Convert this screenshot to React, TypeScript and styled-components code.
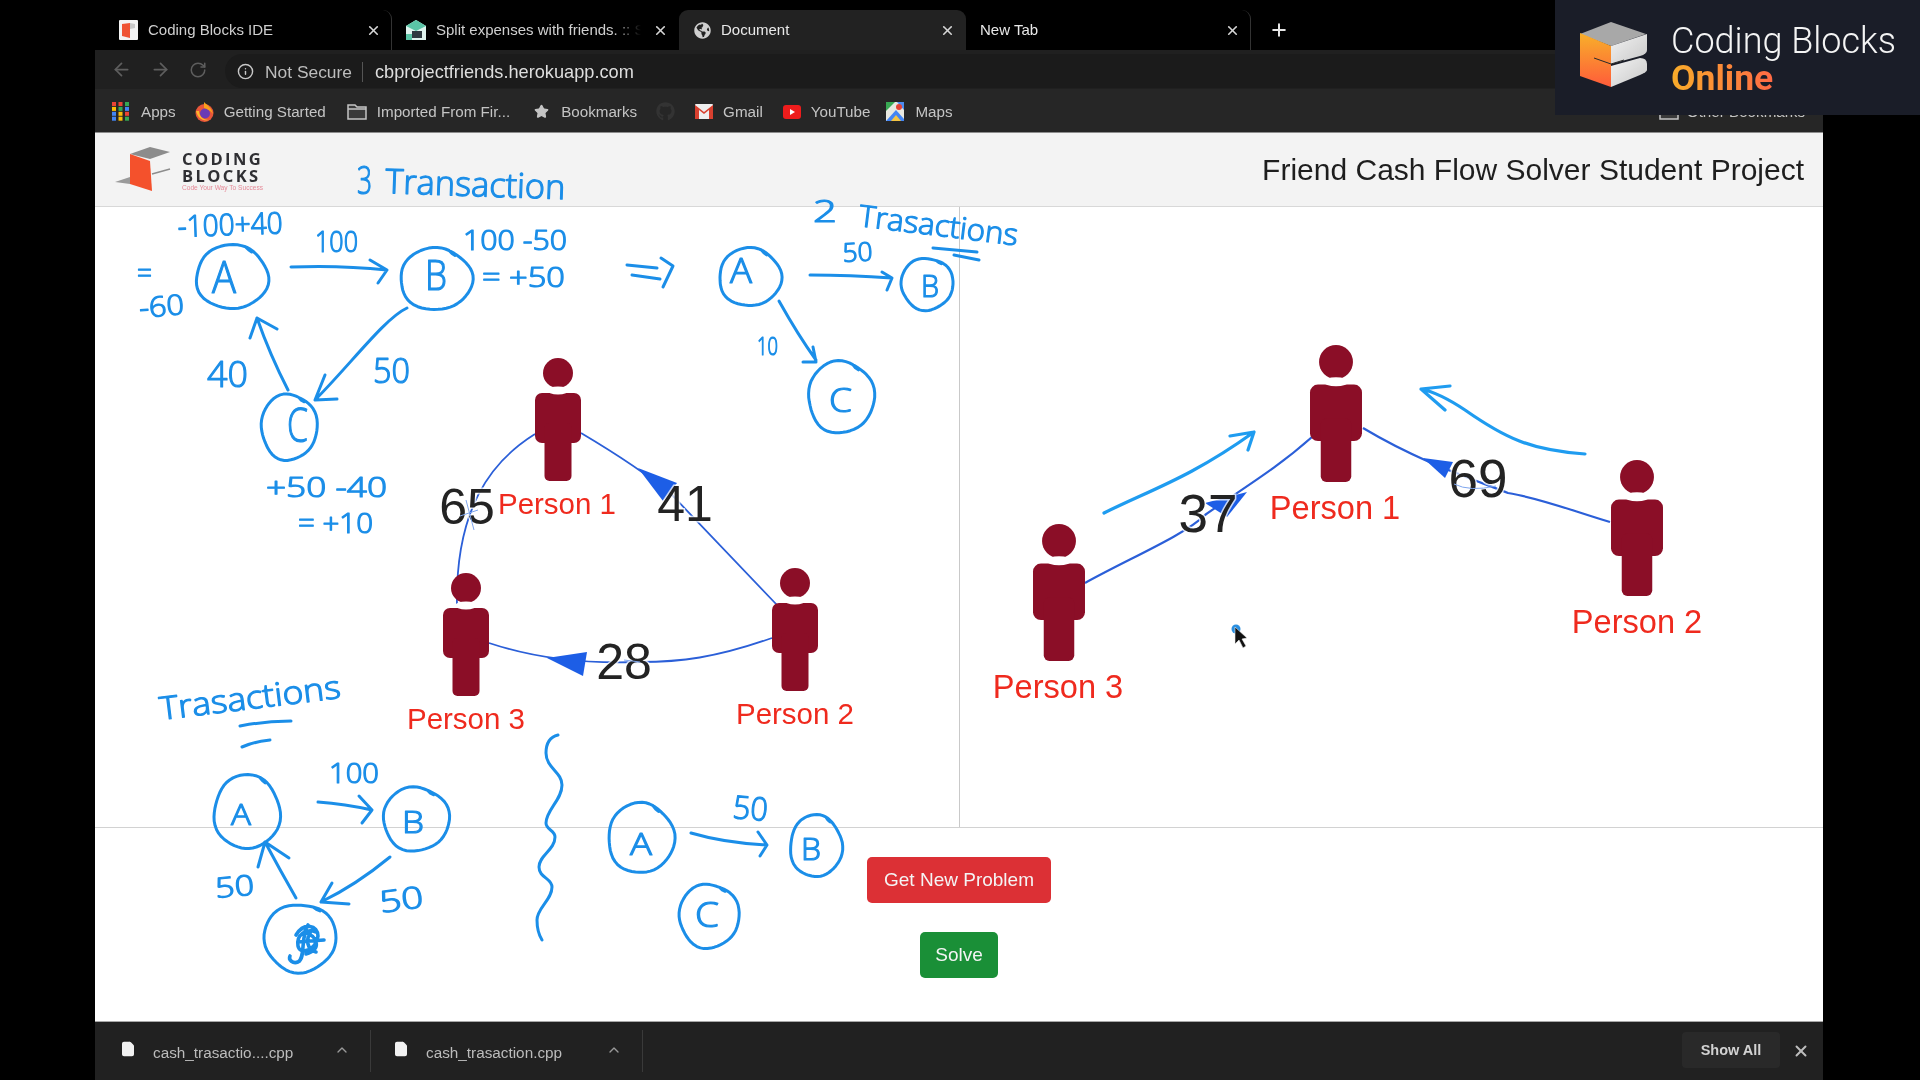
import React from 'react';
import styled, { createGlobalStyle } from 'styled-components';
import { ArrowLeft, ArrowRight, RotateCw, Info, X, Plus, ChevronUp, Star, File } from 'lucide-react';
import { FaGlobeAmericas, FaGithub } from 'react-icons/fa';

const Global = createGlobalStyle`
  html, body { margin: 0; padding: 0; background: #000; }
  body { font-family: "Liberation Sans", Arial, sans-serif; }
`;

const Page = styled.div`
  position: relative;
  width: 1920px;
  height: 1080px;
  overflow: hidden;
  background: #000;
  filter: blur(0.45px);
`;

const Window = styled.div`
  margin-left: 95px;
  width: 1728px;
  height: 1080px;
  display: flex;
  flex-direction: column;
`;

const TabStrip = styled.div`
  height: 40px;
  padding: 10px 0 0 11px;
  display: flex;
  align-items: stretch;
  background: #000;
  flex: none;
`;

const Tab = styled.div<{ $w: number; $active?: boolean; $sep?: boolean; $pad: number }>`
  width: ${p => p.$w}px;
  box-sizing: border-box;
  padding: 0 10px 0 ${p => p.$pad}px;
  display: flex;
  align-items: center;
  gap: 10px;
  background: ${p => (p.$active ? '#222' : 'transparent')};
  border-radius: 9px 9px 0 0;
  border-right: ${p => (p.$sep ? '1px solid #333' : '1px solid transparent')};
`;

const TabTitle = styled.span<{ $fade?: boolean; $active?: boolean }>`
  flex: 1;
  min-width: 0;
  margin-top: -2px;
  white-space: nowrap;
  font-size: 15px;
  color: ${p => (p.$active ? '#e8e8e8' : '#cfcfcf')};
  ${p => (p.$fade ? 'mask-image: linear-gradient(90deg, #000 86%, transparent 99%);' : '')}
`;

const TabClose = styled(X)`
  flex: none;
  width: 15px;
  height: 15px;
  color: #d6d6d6;
  stroke-width: 2.6;
`;

const NewTab = styled(Plus)`
  align-self: center;
  margin-left: 18px;
  width: 20px;
  height: 20px;
  color: #e6e6e6;
  stroke-width: 2.4;
`;

const Toolbar = styled.div`
  height: 39px;
  flex: none;
  box-sizing: border-box;
  padding-left: 16px;
  display: flex;
  align-items: center;
  gap: 18px;
  background: #202020;
  color: #5e5e5e;
`;

const Omnibox = styled.div`
  flex: 1;
  height: 34px;
  margin-top: 2px;
  display: flex;
  align-items: center;
  padding: 2px 0 0 12px;
  box-sizing: border-box;
  border-radius: 17px 0 0 17px;
  background: #1b1b1b;
`;

const InfoIcon = styled(Info)`
  width: 17px;
  height: 17px;
  color: #c8c8c8;
  margin-right: 11px;
`;

const Secure = styled.span`
  font-size: 17.4px;
  color: #bdbdbd;
  padding-right: 10px;
  border-right: 1px solid #555;
  line-height: 20px;
`;

const Url = styled.span`
  font-size: 18.2px;
  padding-top: 1px;
  color: #dedede;
  margin-left: 12px;
`;

const Bookmarks = styled.div`
  height: 44px;
  flex: none;
  box-sizing: border-box;
  padding: 2px 0 0 17px;
  display: flex;
  align-items: center;
  background: #262626;
  border-bottom: 1px solid #8d8d8d;
`;

const Mark = styled.span<{ $gap: number; $left: number }>`
  display: inline-flex;
  align-items: center;
  gap: ${p => p.$gap}px;
  margin-left: ${p => p.$left}px;
  font-size: 15.2px;
  color: #c4c4c4;
  white-space: nowrap;
`;

const OtherMarks = styled(Mark)`
  margin-left: auto;
  margin-right: 18px;
`;

const SiteHeader = styled.header`
  height: 74px;
  flex: none;
  box-sizing: border-box;
  padding: 0 19px 0 20px;
  display: flex;
  align-items: center;
  justify-content: space-between;
  background: #f3f3f3;
  border-bottom: 1px solid #d8d8d8;
`;

const Brand = styled.div`
  display: flex;
  align-items: center;
  gap: 11px;
`;

const BrandText = styled.div`
  display: flex;
  flex-direction: column;
  align-items: flex-start;
  margin-top: 2px;
`;

const BrandWord = styled.span`
  color: #2f2f33;
  font-family: "Open Sans", sans-serif;
  font-weight: 700;
  font-size: 16.5px;
  line-height: 17px;
  letter-spacing: 2.4px;
`;

const BrandTag = styled.span`
  font-size: 6.6px;
  line-height: 8px;
  color: #e58a98;
`;

const SiteTitle = styled.h1`
  margin: 0;
  font-size: 30px;
  font-weight: 400;
  color: #1e1e1e;
`;

const Panels = styled.div`
  height: 621px;
  flex: none;
  display: grid;
  grid-template-columns: 865px 863px;
  background: #fff;
  border-bottom: 1px solid #d2d2d2;
  box-sizing: border-box;
`;

const Panel = styled.div<{ $split?: boolean }>`
  border-right: ${p => (p.$split ? '1px solid #c9c9c9' : 'none')};
`;

const GraphSvg = styled.svg`
  display: block;
  width: 100%;
  height: 100%;
`;

const PersonName = styled.text<{ $size: number }>`
  font-size: ${p => p.$size}px;
  fill: #ef2a1e;
  text-anchor: middle;
`;

const EdgeWeight = styled.text<{ $size: number }>`
  font-size: ${p => p.$size}px;
  fill: #232323;
  text-anchor: middle;
  stroke: rgba(255, 255, 255, 0.75);
  stroke-width: 3px;
  paint-order: stroke;
`;

const Actions = styled.div`
  flex: 1;
  display: flex;
  flex-direction: column;
  align-items: center;
  gap: 29px;
  padding-top: 29px;
  background: #fff;
`;

const Btn = styled.button<{ $bg: string; $w: number }>`
  width: ${p => p.$w}px;
  height: 46px;
  border: none;
  border-radius: 5px;
  background: ${p => p.$bg};
  color: #f4f4f4;
  font-family: "Liberation Sans", sans-serif;
  font-size: 19px;
  padding: 0;
`;

const Downloads = styled.footer`
  height: 59px;
  flex: none;
  box-sizing: border-box;
  padding-left: 3px;
  display: flex;
  align-items: center;
  background: #212121;
  border-top: 1px solid #a8a8a8;
`;

const DownloadItem = styled.div<{ $w: number }>`
  width: ${p => p.$w}px;
  height: 42px;
  box-sizing: border-box;
  padding: 0 20px 0 23px;
  display: flex;
  align-items: center;
  gap: 18px;
  border-right: 1px solid #3a3a3a;
`;

const FileIcon = styled(File)`
  flex: none;
  width: 16px;
  height: 20px;
  margin: -4px -1px 0 -1px;
  color: #f2f2f2;
  fill: #f2f2f2;
`;

const FileName = styled.span`
  flex: 1;
  padding-top: 4px;
  font-size: 15.3px;
  color: #bcbcbc;
  white-space: nowrap;
`;

const Chevron = styled(ChevronUp)`
  flex: none;
  width: 16px;
  height: 16px;
  color: #9a9a9a;
  margin-top: -2px;
`;

const ShowAll = styled.div`
  margin-left: auto;
  margin-top: -2px;
  width: 98px;
  height: 36px;
  display: flex;
  align-items: center;
  justify-content: center;
  border-radius: 4px;
  background: #292929;
  color: #d2d2d2;
  font-size: 14.5px;
  font-weight: 700;
`;

const BarClose = styled(X)`
  width: 18px;
  height: 18px;
  margin: -1px 13px 0 12px;
  color: #bdbdbd;
  stroke-width: 2.6;
`;

const InkLayer = styled.svg`
  position: absolute;
  left: 0;
  top: 0;
  width: 1920px;
  height: 1080px;
  pointer-events: none;
`;

const Ink = styled.path<{ $w?: number; $c?: string }>`
  fill: none;
  stroke: ${p => p.$c || '#1b8ee8'};
  stroke-width: ${p => p.$w || 3}px;
  stroke-linecap: round;
  stroke-linejoin: round;
`;

const InkWord = styled.text`
  font-family: "Open Sans", sans-serif;
  font-weight: 300;
  fill: #1b8ee8;
  stroke: #1b8ee8;
  stroke-width: 1.2px;
  stroke-linejoin: round;
`;

const LogoCard = styled.div`
  position: absolute;
  right: 0;
  top: 0;
  width: 365px;
  height: 115px;
  box-sizing: border-box;
  padding: 22px 0 0 25px;
  display: flex;
  align-items: flex-start;
  gap: 23px;
  background: #1a1d28;
`;

const LogoText = styled.div`
  display: flex;
  flex-direction: column;
  font-family: Roboto, sans-serif;
`;

const LogoName = styled.span`
  font-size: 36px;
  line-height: 38px;
  font-weight: 300;
  color: #f4f4f4;
  white-space: nowrap;
`;

const LogoSub = styled.span`
  font-size: 35.5px;
  line-height: 36px;
  font-weight: 700;
  background: linear-gradient(90deg, #f8ac2a, #ff6a45);
  -webkit-background-clip: text;
  background-clip: text;
  color: transparent;
  width: max-content;
`;

function blob(cx: number, cy: number, rx: number, ry: number, ph = 0): string {
  const pts: string[] = [];
  const n = 56;
  for (let i = 0; i <= n; i++) {
    const t = i / n;
    const a = -1.15 + t * Math.PI * 2 * 1.03;
    const k = 1 + 0.025 * Math.sin(3 * a + ph) + 0.015 * Math.sin(5 * a + ph * 2) + (t > 0.97 ? -0.04 : 0);
    pts.push(`${(cx + rx * k * Math.cos(a)).toFixed(1)} ${(cy + ry * k * Math.sin(a)).toFixed(1)}`);
  }
  return 'M' + pts.join(' L');
}

const circles: [number, number, number, number, number][] = [
  [232, 277, 36, 32, 0.4], [436, 279, 36, 31, 1.2], [289, 427, 28, 33, 2.1],
  [750, 277, 31, 29, 0.9], [927, 284, 26, 26, 2.6], [841, 397, 33, 36, 1.7],
  [247, 812, 33, 37, 0.2], [416, 819, 33, 32, 1.9], [300, 938, 36, 34, 2.9],
  [641, 838, 33, 35, 1.1], [816, 846, 26, 31, 0.6], [709, 916, 30, 32, 2.3],
];

const strokes: string[] = [
  'M291 267 Q340 265 387 270 M370 260 L387 270 L378 283',
  'M407 308 C385 318 350 365 315 400 M325 375 L315 400 L337 399',
  'M288 390 Q270 355 257 318 M250 338 L257 318 L277 329',
  'M627 265 L657 268 M632 275 L660 279 M661 258 L673 266 L663 287',
  'M810 275 Q850 275 892 278 M882 272 L892 278 L887 290',
  'M779 301 Q798 335 816 360 M803 362 L816 362 L813 347',
  'M933 248 L977 252 M954 255 L979 260',
  'M240 726 Q265 721 291 721 M242 747 Q256 741 270 740',
  'M318 802 Q345 804 372 810 M359 796 L372 810 L362 823',
  'M390 857 Q356 885 321 902 M332 883 L321 902 L349 904',
  'M296 898 Q280 870 265 842 M258 867 L265 842 L289 858',
  'M558 735 Q546 738 546 753 C546 768 562 772 562 785 C562 800 546 810 546 823 C546 830 555 830 555 837 C555 850 539 855 539 867 C539 878 552 878 552 887 C552 900 537 908 537 920 Q537 932 542 940',
  'M691 833 Q725 843 767 845 M758 832 L767 845 L760 856',
];

const scribble =
  'M296 935 C304 922 318 925 318 936 C316 950 300 956 298 946 C296 935 306 928 316 932 M308 925 C300 938 306 958 298 962 C293 964 288 960 290 956 M298 942 L324 940 M304 932 C318 936 322 950 306 954 M312 930 C304 940 308 950 316 952';

const lightStrokes: string[] = [
  'M1104 513 C1150 490 1190 478 1254 432 M1230 436 L1254 432 L1248 450',
  'M1585 454 C1530 450 1505 438 1465 410 C1450 400 1435 392 1421 389 M1450 386 L1421 389 L1445 410',
];

const words: [string, number, number, number, number, number][] = [
  ['3', 357, 194, 15, 38, 0],
  ['Transaction', 385, 193, 180, 34, 2],
  ['-100+40', 178, 237, 105, 30, -2],
  ['100', 315, 252, 43, 30, 0],
  ['100 -50', 463, 250, 104, 28, 0],
  ['= +50', 482, 287, 83, 28, 0],
  ['=', 137, 283, 15, 28, 0],
  ['-60', 140, 318, 45, 28, -5],
  ['A', 212, 293, 24, 44, 0],
  ['B', 425, 290, 22, 42, 0],
  ['40', 207, 387, 41, 36, 0],
  ['50', 373, 383, 37, 34, 0],
  ['C', 287, 442, 21, 48, 0],
  ['+50 -40', 266, 497, 121, 28, 0],
  ['= +10', 298, 533, 75, 28, 0],
  ['2', 813, 222, 24, 32, 0],
  ['Trasactions', 858, 226, 160, 30, 7],
  ['50', 843, 262, 30, 26, -3],
  ['A', 730, 283, 22, 34, 0],
  ['B', 921, 297, 18, 32, 0],
  ['10', 757, 355, 21, 26, 0],
  ['C', 829, 412, 23, 33, 0],
  ['Trasactions', 161, 720, 182, 32, -7],
  ['100', 329, 783, 50, 28, 0],
  ['A', 231, 825, 20, 30, 0],
  ['B', 402, 833, 22, 32, 0],
  ['50', 216, 898, 39, 28, -5],
  ['50', 381, 913, 44, 30, -8],
  ['A', 630, 855, 22, 32, 0],
  ['50', 732, 818, 35, 32, 5],
  ['B', 801, 860, 20, 32, 0],
  ['C', 695, 927, 24, 34, 0],
];

const Person: React.FC<{ cx: number; cy: number; s: number; h: number }> = ({ cx, cy, s, h }) => (
  <g fill="#8b0e27">
    <circle cx={cx} cy={cy} r={15 * s} />
    <rect x={cx - 23 * s} y={cy + 20 * s} width={46 * s} height={50 * s} rx={7 * s} />
    <rect x={cx - 13.5 * s} y={cy + 50 * s} width={27 * s} height={h - 50 * s} rx={5 * s} />
    <ellipse cx={cx} cy={cy + 17.5 * s} rx={11 * s} ry={4 * s} fill="#fff" />
  </g>
);

const edge = '#2b5fd8';
const head = '#1d5ee6';

const LeftGraph = () => (
  <GraphSvg viewBox="95 207 864 620">
    <g fill="none" stroke={edge} strokeWidth="1.8">
      <path d="M581 433 Q640 468 672 495 Q720 545 777 605" />
      <path d="M535 434 C490 462 455 510 457 607" />
      <path d="M772 638 C715 658 680 662 640 662 C590 664 540 660 489 643" />
    </g>
    <polygon points="638,468 677,483 663,501" fill={head} />
    <polygon points="547,658 587,652 583,676" fill={head} />
    <Person cx={558} cy={373} s={1} h={108} />
    <Person cx={795} cy={583} s={1} h={108} />
    <Person cx={466} cy={588} s={1} h={108} />
    <PersonName $size={29.5} x={557} y={514}>Person 1</PersonName>
    <PersonName $size={29.5} x={795} y={724}>Person 2</PersonName>
    <PersonName $size={29.5} x={466} y={729}>Person 3</PersonName>
    <EdgeWeight $size={50} x={467} y={524}>65</EdgeWeight>
    <EdgeWeight $size={50} x={685} y={521}>41</EdgeWeight>
    <EdgeWeight $size={50} x={624} y={679}>28</EdgeWeight>
    <path d="M460 516 L478 510 M466 500 L474 530 M624 660 L640 662" fill="none" stroke="#7fa6ee" strokeWidth="1" />
  </GraphSvg>
);

const RightGraph = () => (
  <GraphSvg viewBox="960 207 863 620">
    <g fill="none" stroke={edge} strokeWidth="2.2">
      <path d="M1085 583 C1130 558 1185 535 1205 515 C1240 490 1275 470 1312 437" />
      <path d="M1610 522 C1570 510 1540 498 1508 493 C1470 478 1420 462 1363 428" />
    </g>
    <polygon points="1247,492 1205,503 1227,517" fill={head} />
    <polygon points="1423,458 1453,462 1445,478" fill={head} />
    <Person cx={1336} cy={362} s={1.13} h={120} />
    <Person cx={1637} cy={477} s={1.13} h={119} />
    <Person cx={1059} cy={541} s={1.13} h={120} />
    <PersonName $size={32.6} x={1335} y={519}>Person 1</PersonName>
    <PersonName $size={32.6} x={1637} y={633}>Person 2</PersonName>
    <PersonName $size={32.6} x={1058} y={698}>Person 3</PersonName>
    <EdgeWeight $size={53} x={1208} y={532}>37</EdgeWeight>
    <EdgeWeight $size={53} x={1478} y={497}>69</EdgeWeight>
    <path d="M1454 484 Q1470 492 1496 486" fill="none" stroke="#7fa6ee" strokeWidth="1" />
  </GraphSvg>
);

const CbFavicon = () => (
  <svg width="19" height="20" viewBox="0 0 19 20">
    <rect width="19" height="20" rx="1" fill="#f3f3f3" />
    <path d="M3 4 L11 3 V18 L3 16Z" fill="#ef5333" />
    <path d="M11 3 L16 4 V8 L11 9Z" fill="#c9c9c9" />
  </svg>
);

const SplitFavicon = () => (
  <svg width="20" height="20" viewBox="0 0 20 20">
    <path d="M10 0 L20 6 L20 20 L0 20 L0 6Z" fill="#dff3ee" />
    <path d="M10 0 L20 6 L10 11 L0 6Z" fill="#5bc5a7" />
    <path d="M6 11 L16 11 L16 18 L6 18Z" fill="#2f3a40" />
    <path d="M0 14 L6 14 L6 20 L0 20Z" fill="#5bc5a7" />
  </svg>
);

const AppsIcon = () => {
  const c = ['#ea4335', '#ea4335', '#34a853', '#fbbc05', '#34a853', '#4285f4', '#4285f4', '#fbbc05', '#ea4335', '#4285f4', '#fbbc05', '#34a853'];
  return (
    <svg width="17" height="19" viewBox="0 0 17 19">
      {c.map((f, i) => (
        <rect key={i} x={(i % 3) * 6.5} y={Math.floor(i / 3) * 4.9} width="4" height="4" fill={f} />
      ))}
    </svg>
  );
};

const FirefoxIcon = () => (
  <svg width="19" height="20" viewBox="0 0 19 20">
    <circle cx="9.5" cy="11" r="9" fill="#e8563a" />
    <circle cx="10" cy="11.5" r="5" fill="#6a3bb5" />
    <path d="M9 0 C12 3 17 6 18 12 C15 8 12 7 9 6Z" fill="#f9a01b" />
    <path d="M1 9 C2 15 8 20 14 18 C8 18 4 14 4 9Z" fill="#fcb52a" />
  </svg>
);

const FolderIcon = () => (
  <svg width="20" height="18" viewBox="0 0 20 18" fill="none" stroke="#c4c4c4" strokeWidth="1.5">
    <path d="M1 2 H8 L10 4 H19 V16 H1Z" fill="#3a3a3a" />
    <path d="M1 6 H19" />
  </svg>
);

const GmailIcon = () => (
  <svg width="18" height="15" viewBox="0 0 18 15">
    <rect width="18" height="15" rx="1" fill="#eee" />
    <path d="M0 1 L9 8 L18 1 V15 H14 V6 L9 10 L4 6 V15 H0Z" fill="#d8402f" />
  </svg>
);

const YoutubeIcon = () => (
  <svg width="18" height="14" viewBox="0 0 18 14">
    <rect width="18" height="14" rx="3" fill="#ee1c1c" />
    <path d="M7 4 L12 7 L7 10Z" fill="#fff" />
  </svg>
);

const MapsIcon = () => (
  <svg width="18" height="19" viewBox="0 0 18 19">
    <rect width="18" height="19" fill="#e8e8e0" />
    <path d="M0 0 H9 L0 9Z" fill="#38a853" />
    <path d="M18 0 V8 L11 0Z" fill="#4c8bf0" />
    <path d="M0 19 L10 8 L18 17 V19Z" fill="#4285f4" />
    <path d="M5 19 L10 13 L15 19Z" fill="#f5c542" />
    <circle cx="13" cy="5" r="3" fill="#e44235" />
  </svg>
);

const CubeLarge = () => (
  <svg width="68" height="65" viewBox="0 0 68 65">
    <defs>
      <linearGradient id="cbo" x1="0" y1="0" x2="0" y2="1">
        <stop offset="0" stopColor="#f8b02a" />
        <stop offset="1" stopColor="#ff5b3a" />
      </linearGradient>
      <linearGradient id="cbw" x1="0" y1="0" x2="1" y2="1">
        <stop offset="0" stopColor="#f2f2f2" />
        <stop offset="1" stopColor="#c8c8c8" />
      </linearGradient>
    </defs>
    <path d="M31 0 L66 12 L31 24 L0 12Z" fill="#a8a8a8" />
    <path d="M0 11 L31 24 V65 L0 54Z" fill="url(#cbo)" />
    <path d="M31 24 L67 12 V28 Q67 32 60 34 L31 42Z" fill="url(#cbw)" />
    <path d="M31 44 L60 36 Q67 36 67 42 V48 Q67 50 60 53 L31 65Z" fill="url(#cbw)" />
    <path d="M14 36 L31 42 L44 38" fill="none" stroke="#2a2a2a" strokeWidth="1" />
  </svg>
);

const CubeSmall = () => (
  <svg width="56" height="45" viewBox="115 148 56 45">
    <path d="M130 155 L150 148 L170 153 L150 160Z" fill="#8c8c8c" />
    <path d="M130 155 L150 162 L152 192 L130 185Z" fill="#f4512c" />
    <path d="M115 183 L130 178 V185Z" fill="#9a9a9a" />
    <path d="M152 175 L170 170" stroke="#8c8c8c" strokeWidth="1.5" />
  </svg>
);

const Cursor = () => (
  <g>
    <circle cx="1236" cy="629" r="4.5" fill="#2a8fe0" />
    <path d="M1235 627 L1235 644 L1239 640 L1243 648 L1246 646 L1242 639 L1247 638Z" fill="#111" stroke="#eee" strokeWidth="0.6" />
  </g>
);

export default function App() {
  return (
    <Page>
      <Global />
      <Window>
        <TabStrip>
          <Tab $w={286} $pad={13} $sep>
            <CbFavicon />
            <TabTitle>Coding Blocks IDE</TabTitle>
            <TabClose />
          </Tab>
          <Tab $w={287} $pad={14}>
            <SplitFavicon />
            <TabTitle $fade>Split expenses with friends. :: S</TabTitle>
            <TabClose />
          </Tab>
          <Tab $w={287} $pad={15} $active>
            <FaGlobeAmericas size={17} color="#d0d0d0" />
            <TabTitle $active>Document</TabTitle>
            <TabClose />
          </Tab>
          <Tab $w={285} $pad={14} $sep>
            <TabTitle $active>New Tab</TabTitle>
            <TabClose />
          </Tab>
          <NewTab />
        </TabStrip>
        <Toolbar>
          <ArrowLeft size={21} />
          <ArrowRight size={21} />
          <RotateCw size={18} />
          <Omnibox>
            <InfoIcon />
            <Secure>Not Secure</Secure>
            <Url>cbprojectfriends.herokuapp.com</Url>
          </Omnibox>
        </Toolbar>
        <Bookmarks>
          <Mark $gap={12} $left={0}><AppsIcon />Apps</Mark>
          <Mark $gap={10} $left={19}><FirefoxIcon />Getting Started</Mark>
          <Mark $gap={10} $left={21}><FolderIcon />Imported From Fir...</Mark>
          <Mark $gap={12} $left={24}><Star size={15} fill="#c4c4c4" />Bookmarks</Mark>
          <Mark $gap={0} $left={19}><FaGithub size={19} color="#333" /></Mark>
          <Mark $gap={10} $left={20}><GmailIcon />Gmail</Mark>
          <Mark $gap={10} $left={20}><YoutubeIcon />YouTube</Mark>
          <Mark $gap={11} $left={16}><MapsIcon />Maps</Mark>
          <OtherMarks $gap={8} $left={0}><FolderIcon />Other Bookmarks</OtherMarks>
        </Bookmarks>
        <SiteHeader>
          <Brand>
            <CubeSmall />
            <BrandText>
              <BrandWord>CODING</BrandWord>
              <BrandWord>BLOCKS</BrandWord>
              <BrandTag>Code Your Way To Success</BrandTag>
            </BrandText>
          </Brand>
          <SiteTitle>Friend Cash Flow Solver Student Project</SiteTitle>
        </SiteHeader>
        <Panels>
          <Panel $split><LeftGraph /></Panel>
          <Panel><RightGraph /></Panel>
        </Panels>
        <Actions>
          <Btn $bg="#dc3035" $w={184}>Get New Problem</Btn>
          <Btn $bg="#1a8f37" $w={78}>Solve</Btn>
        </Actions>
        <Downloads>
          <DownloadItem $w={273}>
            <FileIcon />
            <FileName>cash_trasactio....cpp</FileName>
            <Chevron />
          </DownloadItem>
          <DownloadItem $w={272}>
            <FileIcon />
            <FileName>cash_trasaction.cpp</FileName>
            <Chevron />
          </DownloadItem>
          <ShowAll>Show All</ShowAll>
          <BarClose />
        </Downloads>
      </Window>
      <InkLayer viewBox="0 0 1920 1080">
        {circles.map(([cx, cy, rx, ry, ph], i) => (
          <Ink key={i} d={blob(cx, cy, rx, ry, ph)} />
        ))}
        {strokes.map((d, i) => (
          <Ink key={i} d={d} />
        ))}
        <Ink d={scribble} $w={3.6} />
        {lightStrokes.map((d, i) => (
          <Ink key={i} d={d} $c="#1f9cf0" $w={3.2} />
        ))}
        {words.map(([t, x, y, w, size, rot], i) => (
          <InkWord
            key={i}
            x={x}
            y={y}
            fontSize={size}
            textLength={w}
            lengthAdjust="spacingAndGlyphs"
            transform={rot ? `rotate(${rot} ${x} ${y})` : undefined}
          >
            {t}
          </InkWord>
        ))}
        <Cursor />
      </InkLayer>
      <LogoCard>
        <CubeLarge />
        <LogoText>
          <LogoName>Coding Blocks</LogoName>
          <LogoSub>Online</LogoSub>
        </LogoText>
      </LogoCard>
    </Page>
  );
}
